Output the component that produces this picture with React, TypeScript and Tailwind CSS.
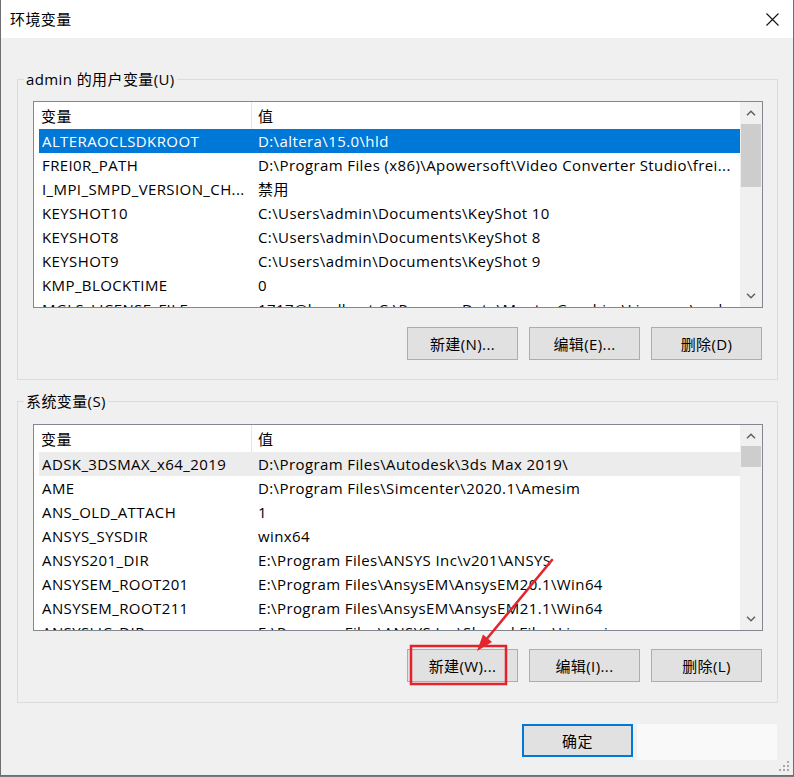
import React from "react";

const userVars = [
  { name: "ALTERAOCLSDKROOT", value: "D:\\altera\\15.0\\hld" },
  { name: "FREI0R_PATH", value: "D:\\Program Files (x86)\\Apowersoft\\Video Converter Studio\\frei..." },
  { name: "I_MPI_SMPD_VERSION_CH...", value: "禁用" },
  { name: "KEYSHOT10", value: "C:\\Users\\admin\\Documents\\KeyShot 10" },
  { name: "KEYSHOT8", value: "C:\\Users\\admin\\Documents\\KeyShot 8" },
  { name: "KEYSHOT9", value: "C:\\Users\\admin\\Documents\\KeyShot 9" },
  { name: "KMP_BLOCKTIME", value: "0" },
  { name: "MGLS_LICENSE_FILE", value: "1717@localhost;C:\\ProgramData\\MentorGraphics\\Licenses\\mgls..." },
];

const systemVars = [
  { name: "ADSK_3DSMAX_x64_2019", value: "D:\\Program Files\\Autodesk\\3ds Max 2019\\" },
  { name: "AME", value: "D:\\Program Files\\Simcenter\\2020.1\\Amesim" },
  { name: "ANS_OLD_ATTACH", value: "1" },
  { name: "ANSYS_SYSDIR", value: "winx64" },
  { name: "ANSYS201_DIR", value: "E:\\Program Files\\ANSYS Inc\\v201\\ANSYS" },
  { name: "ANSYSEM_ROOT201", value: "E:\\Program Files\\AnsysEM\\AnsysEM20.1\\Win64" },
  { name: "ANSYSEM_ROOT211", value: "E:\\Program Files\\AnsysEM\\AnsysEM21.1\\Win64" },
  { name: "ANSYSLIC_DIR", value: "E:\\Program Files\\ANSYS Inc\\Shared Files\\Licensing" },
];

function Chevron({ up }: { up?: boolean }) {
  return (
    <svg width="10" height="6" viewBox="0 0 10 6" className="text-[#606060]">
      <path
        d={up ? "M1 5.2 L5 1.2 L9 5.2" : "M1 0.8 L5 4.8 L9 0.8"}
        fill="none"
        stroke="currentColor"
        strokeWidth="1.5"
      />
    </svg>
  );
}

function Scrollbar({ thumbTop, thumbHeight }: { thumbTop: number; thumbHeight: number }) {
  return (
    <div className="flex w-[22px] shrink-0 flex-col bg-[#f0f0f0]">
      <div className="flex items-center justify-center" style={{ height: thumbTop }}>
        <Chevron up />
      </div>
      <div className="mx-[1px] bg-[#cdcdcd]" style={{ height: thumbHeight }} />
      <div className="flex-1" />
      <div className="flex h-[22px] items-center justify-center">
        <Chevron />
      </div>
    </div>
  );
}

function VarList({
  rows,
  selectedColor,
  thumbTop,
  thumbHeight,
}: {
  rows: { name: string; value: string }[];
  selectedColor: "blue" | "gray";
  thumbTop: number;
  thumbHeight: number;
}) {
  return (
    <div className="flex h-[207px] w-[730px] border border-[#828790] bg-white">
      <div className="flex-1 overflow-hidden pl-[5px]">
        <div className="flex h-[27px] items-center">
          <div className="w-[212px] pl-[2px]">变量</div>
          <div className="h-full w-px bg-[#e5e5e5]" />
          <div className="pl-[6px]">值</div>
        </div>
        {rows.map((r, i) => {
          // first row is the selected one
          const bg = i === 0 ? (selectedColor === "blue" ? "bg-[#0078d7] text-white" : "bg-[#ececec]") : "";
          return (
            <div key={r.name} className={`flex h-[24px] items-center whitespace-nowrap ${bg}`}>
              <div className="w-[212px] shrink-0 overflow-hidden pl-[3px]">{r.name}</div>
              <div className="w-px shrink-0" />
              <div className="overflow-hidden pl-[6px]">{r.value}</div>
            </div>
          );
        })}
      </div>
      <Scrollbar thumbTop={thumbTop} thumbHeight={thumbHeight} />
    </div>
  );
}

function Btn({ children }: { children: React.ReactNode }) {
  return (
    <button className="flex h-[33px] w-[111px] items-center justify-center border border-[#adadad] bg-[#e1e1e1]">
      {children}
    </button>
  );
}

export default function App() {
  return (
    <div className="relative h-[777px] w-[794px] overflow-hidden bg-[#7a7a7a] text-[15px] leading-[20px] tracking-[0.4px] text-black font-['Open_Sans','Noto_Sans_CJK_SC',sans-serif]">
      <div className="flex h-[776px] w-[794px] flex-col border-x border-b border-[#6e6e6e] bg-[#f0f0f0]">
        {/* title bar */}
        <div className="flex h-[38px] shrink-0 items-center justify-between bg-white pl-[9px] pr-[14px]">
          <span>环境变量</span>
          <svg width="13" height="13" viewBox="0 0 13 13">
            <path d="M0.5 0.5 L12.5 12.5 M12.5 0.5 L0.5 12.5" stroke="#111" strokeWidth="1.1" />
          </svg>
        </div>

        {/* user variables */}
        <fieldset className="ml-[16px] mt-[31px] w-[761px] border border-[#dcdcdc] pb-[19px] pl-[15px] pr-[14px]">
          <legend className="-ml-[9px] px-[2px]">admin 的用户变量(U)</legend>
          <div className="mt-[12px]">
            <VarList rows={userVars} selectedColor="blue" thumbTop={22} thumbHeight={63} />
          </div>
          <div className="mt-[19px] flex w-[730px] justify-end gap-[11px] pr-[1px]">
            <Btn>新建(N)...</Btn>
            <Btn>编辑(E)...</Btn>
            <Btn>删除(D)</Btn>
          </div>
        </fieldset>

        {/* system variables */}
        <fieldset className="ml-[16px] mt-[11px] w-[761px] border border-[#dcdcdc] pb-[20px] pl-[15px] pr-[14px]">
          <legend className="-ml-[9px] px-[2px]">系统变量(S)</legend>
          <div className="mt-[13px]">
            <VarList rows={systemVars} selectedColor="gray" thumbTop={21} thumbHeight={21} />
          </div>
          <div className="mt-[18px] flex w-[730px] justify-end gap-[11px] pr-[1px]">
            <Btn>新建(W)...</Btn>
            <Btn>编辑(I)...</Btn>
            <Btn>删除(L)</Btn>
          </div>
        </fieldset>

        {/* bottom buttons */}
        <div className="mt-[21px] flex items-start justify-end pr-[16px]">
          <button className="flex h-[33px] w-[111px] items-center justify-center border-2 border-[#0078d7] bg-[#e1e1e1]">
            确定
          </button>
          <div className="ml-[4px] h-[36px] w-[140px] bg-[#f9f9f9]" />
        </div>

        <div className="flex flex-1 items-end justify-end pb-[2px] pr-[2px]">
          <svg width="12" height="12" viewBox="0 0 12 12">
            <g fill="#a8a8a8">
              <rect x="8" y="0" width="2" height="2" />
              <rect x="4" y="4" width="2" height="2" />
              <rect x="8" y="4" width="2" height="2" />
              <rect x="0" y="8" width="2" height="2" />
              <rect x="4" y="8" width="2" height="2" />
              <rect x="8" y="8" width="2" height="2" />
            </g>
          </svg>
        </div>
      </div>

      {/* annotation: red box and arrow */}
      <svg className="pointer-events-none absolute left-0 top-0" width="794" height="777">
        <rect x="411" y="646" width="95" height="38" fill="none" stroke="#e3222b" strokeWidth="2.5" />
        <line x1="552" y1="560" x2="485" y2="641" stroke="#e3262d" strokeWidth="2.6" strokeLinecap="round" />
        <polygon points="477,651 492,642 483,634.5" fill="#e3262d" />
      </svg>
    </div>
  );
}
